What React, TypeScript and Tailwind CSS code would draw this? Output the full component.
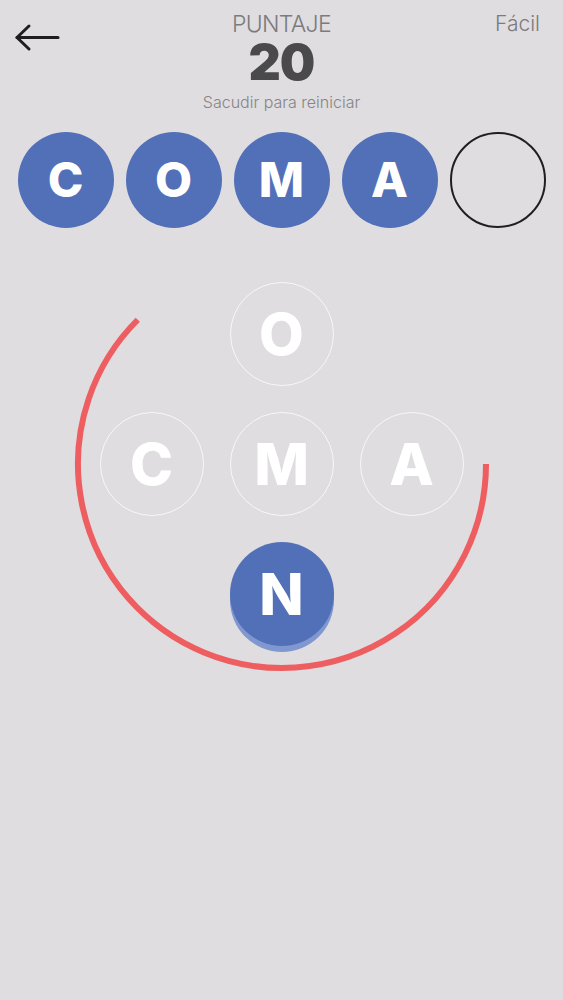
import React from 'react';

const word = ['C', 'O', 'M', 'A'];

function BackArrow() {
  return (
    <svg width="46" height="30" viewBox="0 0 46 30" fill="none" stroke="#1e1e1e" strokeWidth="3" strokeLinecap="round" strokeLinejoin="round">
      <path d="M3 14.5H44" />
      <path d="M15 3L3 14.5L15 26" />
    </svg>
  );
}

function Tile({ letter, filled }: { letter?: string; filled: boolean }) {
  return (
    <div
      className={
        'w-[96px] h-[96px] rounded-full flex items-center justify-center ' +
        (filled ? 'bg-[#5270b8]' : 'border-2 border-[#1f1f1f]')
      }
    >
      {letter && (
        <span className="text-white text-[48px] leading-none font-extrabold font-['Inter',sans-serif]">{letter}</span>
      )}
    </div>
  );
}

function BoardCell({ letter, active }: { letter?: string; active?: boolean }) {
  if (!letter) return <div className="w-[104px] h-[104px]" />;
  return (
    <div
      className={
        'w-[104px] h-[104px] rounded-full flex items-center justify-center ' +
        (active
          ? 'bg-[#5270b8] shadow-[0_6px_0_#8098cf]'
          : 'border-[1.5px] border-[#f7f7f8]')
      }
    >
      <span className="text-white text-[58px] leading-none font-extrabold font-['Inter',sans-serif]">{letter}</span>
    </div>
  );
}

export default function App() {
  return (
    <div className="min-h-screen bg-[#dfdde0] font-['Inter',sans-serif] overflow-hidden">
      {/* header */}
      <div className="grid grid-cols-[1fr_auto_1fr] pt-[13px] px-[14px]">
        <div className="pt-[10px]">
          <BackArrow />
        </div>
        <div className="flex flex-col items-center">
          <div className="text-[23px] leading-[23px] font-light text-[#7b7b7d] tracking-[-0.03em]">PUNTAJE</div>
          <div className="text-[50px] leading-[52px] font-black text-[#4a4a4c] tracking-[-0.02em]">20</div>
          <div className="text-[16px] leading-[20px] font-light text-[#858587] mt-[4px]">Sacudir para reiniciar</div>
        </div>
        <div className="text-right pr-[9px] text-[21px] leading-[22px] font-light text-[#7b7b7d]">Fácil</div>
      </div>

      {/* answer slots */}
      <div className="flex justify-center gap-3 mt-[20px]">
        {word.map((l) => (
          <Tile key={l} letter={l} filled />
        ))}
        <Tile filled={false} />
      </div>

      {/* board */}
      <div className="relative w-[364px] mx-auto mt-[54px]">
        <svg className="absolute left-[-30px] top-[-30px]" width="424" height="424" viewBox="0 0 424 424" fill="none">
          <path d="M67.75 67.75 A204 204 0 1 0 416 212" stroke="#ee5e60" strokeWidth="6" />
        </svg>
        <div className="relative grid grid-cols-3 gap-[26px]">
          <BoardCell />
          <BoardCell letter="O" />
          <BoardCell />
          <BoardCell letter="C" />
          <BoardCell letter="M" />
          <BoardCell letter="A" />
          <BoardCell />
          <BoardCell letter="N" active />
          <BoardCell />
        </div>
      </div>
    </div>
  );
}
